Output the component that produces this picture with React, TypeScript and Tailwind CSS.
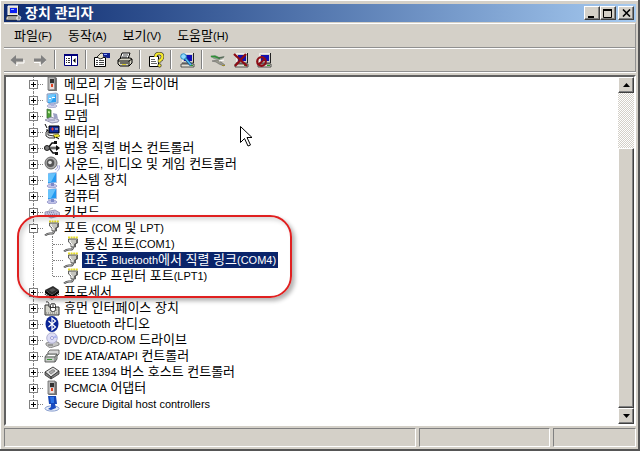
import { Fragment, ReactNode } from "react";

interface TreeItem {
  label: string;
  icon: ReactNode;
  selected?: boolean;
  children?: TreeItem[];
}

const raised =
  "border border-t-white border-l-white border-r-[#404040] border-b-[#404040] bg-[#d4d0c8] shadow-[inset_-1px_-1px_0_#808080]";

function Icon({ children, size = 16 }: { children: ReactNode; size?: number }) {
  return (
    <svg width={size} height={size} viewBox="0 0 16 16" className="shrink-0" aria-hidden="true">
      {children}
    </svg>
  );
}

// Latin runs are set smaller than the Hangul around them
function Label({ text }: { text: string }) {
  const parts = text.split(/([\x21-\x7e]+(?: [\x21-\x7e]+)*)/);
  return (
    <>
      {parts.map((part, i) =>
        i % 2 ? (
          <span key={i} className="text-[11px]">
            {part}
          </span>
        ) : (
          <Fragment key={i}>{part}</Fragment>
        ),
      )}
    </>
  );
}

const ComputerIcon = () => (
  <Icon>
    <path d="M2 1h10v9H2z" fill="#d4d0c8" stroke="#fff" />
    <path d="M12.500 1v9.500H2" fill="none" stroke="#222" />
    <path d="M4 3h7v5H4z" fill="#0a1cf0" />
    <path d="M5 4h3v1H5z" fill="#8fb4ff" />
    <path d="M1 11h11l2 2v2H0v-2z" fill="#d4d0c8" stroke="#222" strokeWidth=".7" />
    <path d="M2 13h8" stroke="#777" />
    <path d="M12 10l3 2-1 3h-3z" fill="#999" stroke="#fff" strokeWidth=".6" />
  </Icon>
);

const MemoryIcon = () => (
  <Icon>
    <path d="M4 1h7l2 1v13H5l-1-1z" fill="#777" />
    <path d="M4 1h7v13H4z" fill="#b9b9b9" stroke="#666" strokeWidth=".8" />
    <path d="M6 3h4v4H6z" fill="#333" />
    <path d="M6 8h4v5H6z" fill="#e9dede" />
    <path d="M7 8h2v3H7z" fill="#e04020" />
  </Icon>
);

const MonitorIcon = () => (
  <Icon>
    <path d="M3 2l9-1 2 1v9l-8 1-3-2z" fill="#b8c8e0" stroke="#7a90b8" strokeWidth=".8" />
    <path d="M4 3l8-1v8l-8 1z" fill="#2b9ff0" />
    <path d="M4 3l8-1-5 8H4z" fill="#6cc8ff" />
    <path d="M5 6h2v1H5zM8 5h3v1H8z" fill="#fff" />
    <ellipse cx="8" cy="14" rx="5" ry="1.700" fill="#cdd0ea" stroke="#8d90c0" strokeWidth=".6" />
    <path d="M7 11h3v3H7z" fill="#aab2dc" />
  </Icon>
);

const SystemIcon = () => (
  <Icon>
    <path d="M4 1l8-1 1 1v10l-9 1z" fill="#a9bde4" />
    <path d="M4 2l8-1v9l-8 1z" fill="#249af0" />
    <path d="M4 2l8-1-5 9H4z" fill="#67c2fb" />
    <ellipse cx="8" cy="14" rx="5" ry="1.800" fill="#bfc2e8" stroke="#8487bd" strokeWidth=".6" />
    <path d="M7 11h3v3H7z" fill="#7d88c8" />
  </Icon>
);

const ModemIcon = () => (
  <Icon>
    <path d="M3 1l4 1v9l-4-1z" fill="#4e9e38" stroke="#3a6a35" strokeWidth=".8" />
    <path d="M4 3l2 .5v2L4 5z" fill="#bdf09a" />
    <path d="M1 12l6-3 8 3-1 2-6 1z" fill="#d9d9ec" stroke="#7d7f9d" strokeWidth=".8" />
    <path d="M9 5l4 1 1 5-4-1z" fill="#9da1c4" />
    <path d="M4 12h7" stroke="#8c8eb0" />
  </Icon>
);

const BatteryIcon = () => (
  <Icon>
    <path d="M1 0l2 4M2 6h2" stroke="#000" fill="none" />
    <path d="M5 2h10v7H5z" fill="#102c9c" stroke="#000" />
    <path d="M7 5h3M8.500 3.500v3" stroke="#e33" />
    <path d="M11 5h3" stroke="#ddd" />
    <path d="M2 8l2-2v5l6 1 1 2H5l-3-2z" fill="#eee" stroke="#000" strokeWidth=".8" />
    <path d="M9 11l5-1 2 2-4 2z" fill="#f0e830" stroke="#55500a" strokeWidth=".6" />
    <path d="M12 13l3 2" stroke="#000" />
  </Icon>
);

const UsbIcon = () => (
  <Icon>
    <path d="M0 8h14" stroke="#222" strokeWidth="2.500" />
    <path d="M1 8h11" stroke="#aaa" />
    <path d="M4 8l4-5h3M5 8l4 5h3" fill="none" stroke="#111" strokeWidth="1.400" />
    <circle cx="3" cy="8" r="2.500" fill="#777" stroke="#222" />
    <path d="M12 5l4 3-4 3z" fill="#111" />
    <path d="M10 1h3v3h-3zM11 12h3v3h-3z" fill="#111" />
  </Icon>
);

const SoundIcon = () => (
  <Icon>
    <ellipse cx="7" cy="7" rx="6" ry="6" fill="#aaa" stroke="#666" />
    <ellipse cx="6.500" cy="7" rx="3.800" ry="4" fill="#555" />
    <circle cx="6" cy="6.500" r="1.800" fill="#e4e4e4" />
    <path d="M11 14q3-1 3-5M13 15.500q3-2 2.500-6" fill="none" stroke="#a3a6dc" />
  </Icon>
);

const KeyboardIcon = () => (
  <Icon>
    <path d="M1 8l10-2 5 3-1 3-8 2-6-3z" fill="#c2c2dd" stroke="#8888aa" strokeWidth=".8" />
    <path d="M3 9l8-1M4 11l9-1M6 12.500l7-1" stroke="#7e7ea6" strokeDasharray="1 1" />
    <path d="M5 7q0-3 4-3" fill="none" stroke="#bbb" />
  </Icon>
);

const PortIcon = () => (
  <Icon>
    <path d="M5 1.500h10" stroke="#e6dc28" strokeWidth="2" strokeDasharray="2 .6" />
    <path d="M5.500 3h9v4l-2 1v3H8V8L5.500 6z" fill="#c4c4be" stroke="#444" strokeWidth=".8" />
    <path d="M7 4v2l2 2v2" stroke="#fff" fill="none" />
    <path d="M13.500 4v3l-2 1v3" stroke="#666" fill="none" />
    <path d="M10 11q0 3-3 2.500T1 15.500" fill="none" stroke="#444" strokeWidth="2" />
    <path d="M10 11q0 3-3 2.500T1 15.500" fill="none" stroke="#ccc" strokeWidth=".7" />
  </Icon>
);

const CpuIcon = () => (
  <Icon>
    <path d="M1 6l8-4 6 4-7 5z" fill="#2c2c2c" />
    <path d="M1 6l7 5v3L1 9zM15 6l-7 5v3l7-5z" fill="#080808" />
    <path d="M5 6l4-2 3 2-4 2z" fill="#555" />
    <path d="M1 10l7 5 7-5" fill="none" stroke="#222" strokeWidth="1.500" strokeDasharray="1 1" />
  </Icon>
);

const HidIcon = () => (
  <Icon>
    <path d="M1 5h4v2h10v8H1z" fill="#d2d2c9" stroke="#333" />
    <path d="M2 2q3-1 3 3M7 4l2 2" fill="none" stroke="#333" />
    <rect x="6.500" y="3.500" width="5" height="8" rx="2" fill="#fff" stroke="#333" />
    <path d="M9 4v3M7 7.500h4" stroke="#333" />
    <path d="M12 10h3M2 13h12" stroke="#777" strokeDasharray="1 1" />
  </Icon>
);

const BluetoothIcon = () => (
  <Icon>
    <ellipse cx="8" cy="8" rx="6.500" ry="8" fill="#0b2596" />
    <path d="M4.500 5l7 6L8 14V2l3.500 3-7 6" fill="none" stroke="#fff" strokeWidth="1.200" />
  </Icon>
);

const DiscIcon = () => (
  <Icon>
    <path d="M2 11l9-2 4 2v2l-9 3-4-3z" fill="#c5c5c5" stroke="#777" strokeWidth=".8" />
    <circle cx="8" cy="6" r="5.300" fill="#dcdcf4" stroke="#a5a5c8" strokeWidth=".8" />
    <path d="M8 6l4-3a5 5 0 0 1 1 3z" fill="#aeb6f0" />
    <circle cx="8" cy="6" r="1.500" fill="#fff" stroke="#8888cc" strokeWidth=".8" />
    <path d="M4 13h5" stroke="#666" />
  </Icon>
);

const IdeIcon = () => (
  <Icon>
    <path d="M4 4l2-2h9v4l-2 2H4z" fill="#d8d8d8" stroke="#555" strokeWidth=".8" />
    <path d="M1 9l2-3h10v5l-2 3H1z" fill="#c4c8c4" stroke="#444" strokeWidth=".8" />
    <path d="M1 9h10v5M11 9l2-3" fill="none" stroke="#555" strokeWidth=".8" />
    <path d="M3 11.500h5" stroke="#3a9a3a" />
    <path d="M4 7.500h7" stroke="#fff" />
  </Icon>
);

const FirewireIcon = () => (
  <Icon>
    <path d="M1 8l8-5 6 4-8 6z" fill="#e1e1e1" stroke="#333" strokeWidth=".9" />
    <path d="M1 8v3l6 4v-2zM15 7v3l-8 5v-2z" fill="#8a8a8a" stroke="#333" strokeWidth=".8" />
    <path d="M5 8l4-2.500L11 7l-4 3z" fill="#aaa" stroke="#666" strokeWidth=".6" />
  </Icon>
);

const SecureIcon = () => (
  <Icon>
    <ellipse cx="8" cy="12.500" rx="7" ry="2.600" fill="#e6edf8" stroke="#7c93c8" strokeWidth=".9" />
    <path d="M4 0h8l1 8H5z" fill="#1547b8" />
    <path d="M6 1h4v6H7z" fill="#2c73e6" />
    <path d="M7 8h4l1 4-5 2-3-1 3-2z" fill="#1a4cc0" />
  </Icon>
);

const BackIcon = () => (
  <Icon>
    <path d="M3 9l5 5v-3h7V8" fill="none" stroke="#fff" />
    <path d="M1.500 8L7 3v3.500h7v3H7V13z" fill="#808080" />
  </Icon>
);

const ForwardIcon = () => (
  <Icon>
    <path d="M2 10.500h6V14l6-5.500" fill="none" stroke="#fff" />
    <path d="M14.500 8L9 3v3.500H2v3h7V13z" fill="#808080" />
  </Icon>
);

const PaneIcon = () => (
  <Icon>
    <path d="M1.500 2.500h13v11h-13z" fill="#fff" stroke="#00007b" />
    <path d="M1 2h14v2H1z" fill="#00007b" />
    <path d="M8.500 4v9" stroke="#00007b" />
    <path d="M3 6.500h1M5 6.500h2M3 8.500h1M5 8.500h2M3 10.500h1M5 10.500h2" stroke="#333" />
    <path d="M12.500 6v5L10 8.500z" fill="#000" />
  </Icon>
);

const PropertiesIcon = () => (
  <Icon>
    <path d="M.5 5.500h11v9H.5z" fill="#fff" stroke="#000" />
    <path d="M2 8.500h2M5 8.500h5M2 10.500h2M5 10.500h5M2 12.500h2M5 12.500h5" stroke="#444" />
    <path d="M3 5l4-4 4 1-2 4-3 1z" fill="#e5e1cd" stroke="#000" strokeWidth=".8" />
    <path d="M9 1h7v5h-3L9 4z" fill="#10208c" />
    <path d="M10 2.500h3" stroke="#8ba5ff" />
  </Icon>
);

const PrintIcon = () => (
  <Icon>
    <path d="M5 1h8l-2 6H3z" fill="#fff" stroke="#000" />
    <path d="M6 3h5M5 5h5" stroke="#444" />
    <path d="M1 8l3-2h9l2 1v4l-3 3H3l-2-2z" fill="#d6d4c4" stroke="#000" />
    <path d="M1 9h11l3-2M12 9v5M3 11h8" stroke="#000" fill="none" />
    <path d="M5 12.500h4" stroke="#d8c92b" />
  </Icon>
);

const HelpIcon = () => (
  <Icon>
    <path d="M1.500 4.500h9v10h-9z" fill="#fff" stroke="#000" />
    <path d="M3 7.500h4M3 9.500h5M3 11.500h6" stroke="#666" />
    <path d="M7.500 5q0-3.500 3.500-3.500t3.500 3-3 4v2" fill="none" stroke="#333" strokeWidth="3.400" />
    <path d="M7.500 5q0-3.500 3.500-3.500t3.500 3-3 4v1.800" fill="none" stroke="#f5e92d" strokeWidth="2.200" />
    <circle cx="11.500" cy="13.500" r="1.700" fill="#f5e92d" stroke="#333" strokeWidth=".8" />
  </Icon>
);

const Pc = () => (
  <>
    <path d="M3.500 1.500h11v9h-11z" fill="#d4d0c8" stroke="#eee" />
    <path d="M14.500 1v10H3" fill="none" stroke="#222" />
    <path d="M5 3h8v6H5z" fill="#1010b4" />
    <path d="M2 12h13v3H2z" fill="#e1ded5" stroke="#333" strokeWidth=".8" />
    <path d="M11 13.500h3" stroke="#2a9a2a" />
  </>
);

const ScanIcon = () => (
  <Icon>
    <Pc />
    <path d="M6 6l6 7" stroke="#124d80" strokeWidth="3" />
    <path d="M6 6l6 7" stroke="#53bcf5" strokeWidth="1.600" />
    <circle cx="4.500" cy="4.500" r="2.800" fill="#8fdcff" stroke="#2c86bd" />
  </Icon>
);

const UpdateIcon = () => (
  <Icon>
    <path d="M0 4l5-1 4 2 6-1-3 3-3 1-5-1z" fill="#8b9c8b" />
    <path d="M1 4.500h4l5 2" stroke="#2e9135" fill="none" strokeWidth="1.400" />
    <path d="M8 6l6-1" stroke="#556355" />
    <path d="M2 9l5-1 4 2 4 3-1 1-5-2-3-2z" fill="#99998c" stroke="#666" strokeWidth=".6" />
    <path d="M9 9l5-1" stroke="#fff" />
    <path d="M12 13.500h3" stroke="#9c8a2b" />
  </Icon>
);

const UninstallIcon = () => (
  <Icon>
    <Pc />
    <path d="M1 2l13 12M13 2L2 14" stroke="#8e0d16" strokeWidth="2.300" />
  </Icon>
);

const DisableIcon = () => (
  <Icon>
    <Pc />
    <circle cx="5.500" cy="9.500" r="4.300" fill="none" stroke="#8e0d16" strokeWidth="2.200" />
    <path d="M3 12.500l6-6" stroke="#8e0d16" strokeWidth="2" />
  </Icon>
);

const menus = ["파일(F)", "동작(A)", "보기(V)", "도움말(H)"];

const toolbar = [
  [
    { name: "뒤로", icon: <BackIcon /> },
    { name: "앞으로", icon: <ForwardIcon /> },
  ],
  [{ name: "콘솔 트리 표시/숨기기", icon: <PaneIcon /> }],
  [
    { name: "속성", icon: <PropertiesIcon /> },
    { name: "인쇄", icon: <PrintIcon /> },
  ],
  [{ name: "도움말", icon: <HelpIcon /> }],
  [{ name: "하드웨어 변경 사항 검색", icon: <ScanIcon /> }],
  [
    { name: "드라이버 업데이트", icon: <UpdateIcon /> },
    { name: "제거", icon: <UninstallIcon /> },
    { name: "사용 안 함", icon: <DisableIcon /> },
  ],
];

const devices: TreeItem[] = [
  { label: "메모리 기술 드라이버", icon: <MemoryIcon /> },
  { label: "모니터", icon: <MonitorIcon /> },
  { label: "모뎀", icon: <ModemIcon /> },
  { label: "배터리", icon: <BatteryIcon /> },
  { label: "범용 직렬 버스 컨트롤러", icon: <UsbIcon /> },
  { label: "사운드, 비디오 및 게임 컨트롤러", icon: <SoundIcon /> },
  { label: "시스템 장치", icon: <SystemIcon /> },
  { label: "컴퓨터", icon: <SystemIcon /> },
  { label: "키보드", icon: <KeyboardIcon /> },
  {
    label: "포트 (COM 및 LPT)",
    icon: <PortIcon />,
    children: [
      { label: "통신 포트(COM1)", icon: <PortIcon /> },
      { label: "표준 Bluetooth에서 직렬 링크(COM4)", icon: <PortIcon />, selected: true },
      { label: "ECP 프린터 포트(LPT1)", icon: <PortIcon /> },
    ],
  },
  { label: "프로세서", icon: <CpuIcon /> },
  { label: "휴먼 인터페이스 장치", icon: <HidIcon /> },
  { label: "Bluetooth 라디오", icon: <BluetoothIcon /> },
  { label: "DVD/CD-ROM 드라이브", icon: <DiscIcon /> },
  { label: "IDE ATA/ATAPI 컨트롤러", icon: <IdeIcon /> },
  { label: "IEEE 1394 버스 호스트 컨트롤러", icon: <FirewireIcon /> },
  { label: "PCMCIA 어댑터", icon: <MemoryIcon /> },
  { label: "Secure Digital host controllers", icon: <SecureIcon /> },
];

function TreeRow({ item, last }: { item: TreeItem; last: boolean }) {
  return (
    <li role="treeitem" aria-expanded={!!item.children}>
      <div className="flex h-4 items-center">
        <div className="flex h-4 w-[9px] flex-col items-center">
          <span className="h-1 border-l border-dotted border-[#808080]" />
          <button
            aria-label={item.label}
            className="flex size-[9px] shrink-0 items-center justify-center border border-[#808080] bg-white"
          >
            <svg width="5" height="5" viewBox="0 0 5 5" stroke="#000">
              <path d={item.children ? "M0 2.500h5" : "M0 2.500h5M2.500 0v5"} />
            </svg>
          </button>
          {!last && <span className="flex-1 border-l border-dotted border-[#808080]" />}
        </div>
        <span className="mr-px w-[5px] border-t border-dotted border-[#808080]" />
        {item.icon}
        <span className="px-1 whitespace-pre">
          <Label text={item.label} />
        </span>
      </div>
      {item.children && (
        <ul role="group">
          {item.children.map((child, i) => (
            <li key={child.label} role="treeitem" className="flex h-4 items-center">
              <span className="ml-1 h-4 w-[19px] border-l border-dotted border-[#808080]" />
              <span className="h-4 w-px">
                <span
                  className={`block border-l border-dotted border-[#808080] ${
                    i === item.children!.length - 1 ? "h-2" : "h-4"
                  }`}
                />
              </span>
              <span className="w-[10px] border-t border-dotted border-[#808080]" />
              {child.icon}
              <span
                className={`ml-[3px] px-0.5 whitespace-pre ${
                  child.selected ? "bg-[#0a246a] text-white" : ""
                }`}
              >
                <Label text={child.label} />
              </span>
            </li>
          ))}
        </ul>
      )}
    </li>
  );
}

function ScrollBar() {
  return (
    <div className="flex w-4 shrink-0 flex-col bg-[repeating-conic-gradient(#fff_0_25%,#d4d0c8_0_50%)] bg-size-[2px_2px]">
      <button aria-label="위로" className={`flex size-4 items-center justify-center ${raised}`}>
        <svg width="7" height="4" viewBox="0 0 7 4">
          <path d="M0 4h7L3.500 0z" />
        </svg>
      </button>
      <div className="flex-1" />
      <div className={`h-3/4 ${raised}`} />
      <button aria-label="아래로" className={`flex size-4 items-center justify-center ${raised}`}>
        <svg width="7" height="4" viewBox="0 0 7 4">
          <path d="M0 0h7L3.500 4z" />
        </svg>
      </button>
    </div>
  );
}

function TitleBar() {
  const button = `flex h-[14px] w-4 items-center justify-center ${raised}`;
  return (
    <header className="flex h-[18px] items-center bg-linear-to-r from-[#0f2b70] to-[#a6caf0] pr-0.5 pl-0.5">
      <ComputerIcon />
      <h1 className="ml-[3px] flex-1 text-sm leading-4 font-bold text-white">장치 관리자</h1>
      <button aria-label="최소화" className={button}>
        <svg width="10" height="9" viewBox="0 0 10 9">
          <path d="M1 7h6v2H1z" />
        </svg>
      </button>
      <button aria-label="최대화" className={button}>
        <svg width="10" height="9" viewBox="0 0 10 9">
          <path d="M.5 1h8v7.500h-8z" fill="none" stroke="#000" />
          <path d="M0 0h9v2H0z" />
        </svg>
      </button>
      <button aria-label="닫기" className={`ml-0.5 ${button}`}>
        <svg width="9" height="8" viewBox="0 0 9 8">
          <path d="M1 .5l7 7M8 .5l-7 7" stroke="#000" strokeWidth="1.600" />
        </svg>
      </button>
    </header>
  );
}

export default function App() {
  return (
    <div className="flex min-h-screen flex-col border-r-2 border-b-2 border-[#555] bg-[#d4d0c8] font-['Liberation_Sans','Noto_Sans_CJK_KR',sans-serif] text-[13px] leading-4 text-black">
      <div className="flex flex-1 flex-col border-t border-l border-white pt-[3px] pr-0.5 pb-0.5 pl-[3px]">
        <TitleBar />

        <nav className="mt-px flex h-6 items-center border-t border-r border-t-white border-r-[#909090] px-0.5">
          {menus.map((menu) => (
            <button key={menu} className="px-2">
              <Label text={menu} />
            </button>
          ))}
        </nav>

        <div className="flex h-[25px] items-center border-t border-r border-b border-[#909090] pl-px shadow-[inset_0_1px_0_#fff,0_1px_0_#fff]">
          {toolbar.map((group, i) => (
            <Fragment key={i}>
              {i > 0 && <span className="mr-1 ml-[3px] h-[19px] w-px bg-[#808080] shadow-[1px_0_0_#fff]" />}
              {group.map((tool) => (
                <button
                  key={tool.name}
                  aria-label={tool.name}
                  className="flex h-[22px] w-[23px] items-center justify-center"
                >
                  {tool.icon}
                </button>
              ))}
            </Fragment>
          ))}
        </div>

        <main className="mt-[3px] flex flex-1 border-2 border-t-[#606060] border-r-white border-b-white border-l-[#606060] bg-white">
          <div className="relative flex-1 overflow-hidden">
            <ul role="tree" className="-mt-px pl-[23px]">
              {devices.map((item, i) => (
                <TreeRow key={item.label} item={item} last={i === devices.length - 1} />
              ))}
            </ul>
            <div className="pointer-events-none absolute top-[138px] left-[11px] h-[83px] w-[275px] rounded-[22px] border-2 border-[#e02020] shadow-[3px_3px_4px_rgba(0,0,0,0.3),inset_3px_3px_4px_rgba(0,0,0,0.15)]" />
            <svg
              className="absolute top-[49px] left-[234px]"
              width="13"
              height="21"
              viewBox="0 0 13 21"
              aria-hidden="true"
            >
              <path
                d="M.5.5v16l4-4 3.500 7.500 2.500-1-3.500-7.500h5z"
                fill="#fff"
                stroke="#000"
              />
            </svg>
          </div>
          <ScrollBar />
        </main>

        <footer className="mt-0.5 flex h-[19px] gap-[3px]">
          <div className="flex-1 border border-t-[#808080] border-r-white border-b-white border-l-[#808080]" />
          <div className="w-[131px] border border-t-[#808080] border-r-white border-b-white border-l-[#808080]" />
          <div className="w-[83px] border border-t-[#808080] border-r-white border-b-white border-l-[#808080]" />
        </footer>
      </div>
    </div>
  );
}
